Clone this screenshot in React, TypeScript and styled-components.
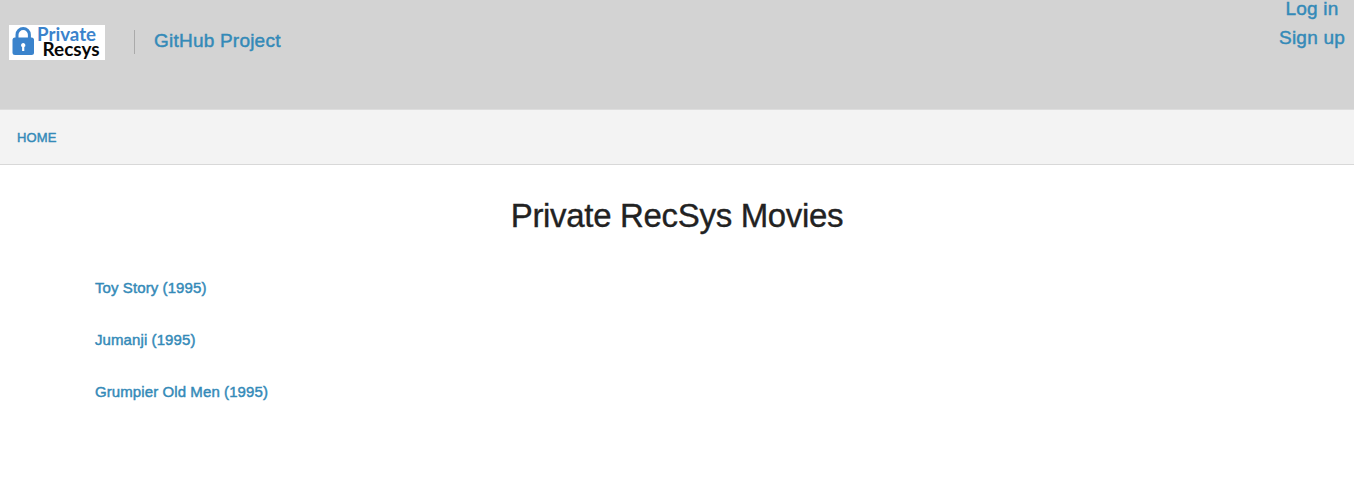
import React from "react";
import styled, { createGlobalStyle } from "styled-components";

const GlobalStyle = createGlobalStyle`
  *, *::before, *::after { box-sizing: border-box; }
  body {
    margin: 0;
    background: #fff;
    font-family: "Liberation Sans", Arial, sans-serif;
    color: #222;
  }
`;

const Link = styled.a`
  color: #348ab8;
  -webkit-text-stroke: 0.45px currentColor;
  text-decoration: none;
  white-space: nowrap;
`;

const Header = styled.header`
  display: flex;
  justify-content: space-between;
  height: 109px;
  padding: 0 9px;
  background: #d3d3d3;
`;

const Brand = styled.div`
  display: flex;
  align-items: flex-start;
  padding-top: 25px;
`;

const Logo = styled.svg`
  display: block;
  width: 96px;
  height: 35px;
  background: #fff;
`;

const ProjectBox = styled.div`
  display: flex;
  align-items: center;
  height: 24px;
  margin: 5px 0 0 29px;
  padding: 0 0 4px 19px;
  border-left: 1px solid #aaa;
`;

const HeaderLink = styled(Link)`
  font-size: 19px;
  line-height: 29px;
  letter-spacing: 0.22px;
`;

const Account = styled.nav`
  display: flex;
  flex-direction: column;
  align-items: center;
  margin-top: -6px;
`;

const NavBar = styled.nav`
  display: flex;
  align-items: center;
  height: 56px;
  padding: 2px 17px 0;
  background: #f3f3f3;
  border-top: 1px solid #ddd;
  border-bottom: 1px solid #d8d8d8;
`;

const NavLink = styled(Link)`
  font-size: 13px;
  line-height: 16px;
  letter-spacing: 0.1px;
`;

const Title = styled.h1`
  margin: 29px 0 0;
  font-size: 33px;
  font-weight: 400;
  line-height: 44px;
  letter-spacing: -0.32px;
  text-align: center;
  -webkit-text-stroke: 0.35px currentColor;
`;

const MovieList = styled.ul`
  display: flex;
  flex-direction: column;
  gap: 32px;
  margin: 40px 0 0;
  padding: 0 95px;
  list-style: none;
`;

const Movie = styled.li`
  height: 20px;
  font-size: 15px;
  line-height: 20px;
  letter-spacing: 0.09px;
`;

const movies = ["Toy Story (1995)", "Jumanji (1995)", "Grumpier Old Men (1995)"];

export default function App() {
  return (
    <>
      <GlobalStyle />
      <Header>
        <Brand>
          <Logo viewBox="0 0 96 35" role="img" aria-label="Private Recsys">
            <path d="M8 14V9.7a6.2 6.2 0 0 1 12.4 0V14" fill="none" stroke="#3a83cc" strokeWidth="3" />
            <rect x="3.5" y="12.5" width="21.5" height="17.5" rx="2.5" fill="#3a83cc" />
            <path d="M14.2 18a2.2 2.2 0 0 0-1.1 4.1V26h2.2v-3.9A2.2 2.2 0 0 0 14.2 18Z" fill="#fff" />
            <g fontFamily="Lato, sans-serif" fontSize="18" fontWeight="700">
              <text x="28" y="16" fill="#3a83cc" textLength="59" lengthAdjust="spacingAndGlyphs">Private</text>
              <text x="33.5" y="30.6" fill="#080808" textLength="57" lengthAdjust="spacingAndGlyphs">Recsys</text>
            </g>
          </Logo>
          <ProjectBox>
            <HeaderLink>GitHub Project</HeaderLink>
          </ProjectBox>
        </Brand>
        <Account>
          <HeaderLink>Log in</HeaderLink>
          <HeaderLink>Sign up</HeaderLink>
        </Account>
      </Header>
      <NavBar>
        <NavLink>HOME</NavLink>
      </NavBar>
      <main>
        <Title>Private RecSys Movies</Title>
        <MovieList>
          {movies.map((movie) => (
            <Movie key={movie}>
              <Link>{movie}</Link>
            </Movie>
          ))}
        </MovieList>
      </main>
    </>
  );
}
